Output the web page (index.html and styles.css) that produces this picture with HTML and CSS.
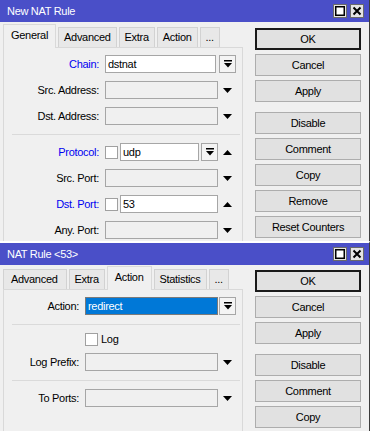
FILE: index.html
```html
<!DOCTYPE html>
<html lang="en">
<head>
    <meta charset="UTF-8">
    <meta name="viewport" content="width=device-width, initial-scale=1.0">
    <title>NAT Rule</title>
    <link rel="stylesheet" href="styles.css">
</head>
<body>
    <!-- first window: new rule, General tab -->
    <div class="window win-new">
        <div class="titlebar">
            <span class="title">New NAT Rule</span>
            <div class="tb-buttons">
                <svg width="14" height="14"><rect x="0.5" y="0.5" width="13" height="13" fill="#e4e4e4" stroke="#6a6a6a"/><rect x="2.75" y="2.75" width="8.5" height="8.5" fill="#fff" stroke="#000" stroke-width="1.5"/></svg>
                <svg width="14" height="14"><rect x="0.5" y="0.5" width="13" height="13" fill="#e4e4e4" stroke="#6a6a6a"/><path d="M3.5 3.5L10.5 10.5M10.5 3.5L3.5 10.5" stroke="#000" stroke-width="2"/></svg>
            </div>
        </div>
        <div class="win-body">
            <div class="left">
                <div class="tabs">
                    <div class="tab active">General</div>
                    <div class="tab">Advanced</div>
                    <div class="tab">Extra</div>
                    <div class="tab">Action</div>
                    <div class="tab">...</div>
                </div>
                <div class="panel">
                    <div class="row">
                        <span class="lbl blue">Chain:</span>
                        <div class="main"><div class="input filled short">dstnat</div></div>
                        <div class="side"><div class="dd"><svg width="8" height="8"><rect width="8" height="1.5"/><path d="M0 3h8L4 7.5z"/></svg></div></div>
                    </div>
                    <div class="row">
                        <span class="lbl">Src. Address:</span>
                        <div class="main"><div class="input"></div></div>
                        <div class="side"><svg width="9" height="5"><path d="M0 0h9L4.5 5z"/></svg></div>
                    </div>
                    <div class="row">
                        <span class="lbl">Dst. Address:</span>
                        <div class="main"><div class="input"></div></div>
                        <div class="side"><svg width="9" height="5"><path d="M0 0h9L4.5 5z"/></svg></div>
                    </div>
                    <div class="sep"></div>
                    <div class="row">
                        <span class="lbl blue">Protocol:</span>
                        <div class="main">
                            <span class="check"></span>
                            <div class="input filled">udp</div>
                            <div class="dd"><svg width="8" height="8"><rect width="8" height="1.5"/><path d="M0 3h8L4 7.5z"/></svg></div>
                        </div>
                        <div class="side"><svg width="9" height="5"><path d="M0 5h9L4.5 0z"/></svg></div>
                    </div>
                    <div class="row">
                        <span class="lbl">Src. Port:</span>
                        <div class="main"><div class="input"></div></div>
                        <div class="side"><svg width="9" height="5"><path d="M0 0h9L4.5 5z"/></svg></div>
                    </div>
                    <div class="row">
                        <span class="lbl blue">Dst. Port:</span>
                        <div class="main">
                            <span class="check"></span>
                            <div class="input filled">53</div>
                        </div>
                        <div class="side"><svg width="9" height="5"><path d="M0 5h9L4.5 0z"/></svg></div>
                    </div>
                    <div class="row">
                        <span class="lbl">Any. Port:</span>
                        <div class="main"><div class="input"></div></div>
                        <div class="side"><svg width="9" height="5"><path d="M0 0h9L4.5 5z"/></svg></div>
                    </div>
                </div>
            </div>
            <div class="buttons">
                <div class="btn default">OK</div>
                <div class="btn">Cancel</div>
                <div class="btn sp">Apply</div>
                <div class="btn">Disable</div>
                <div class="btn">Comment</div>
                <div class="btn">Copy</div>
                <div class="btn">Remove</div>
                <div class="btn">Reset Counters</div>
            </div>
        </div>
    </div>

    <!-- second window: existing rule, Action tab -->
    <div class="window win-rule">
        <div class="titlebar">
            <span class="title">NAT Rule &lt;53&gt;</span>
            <div class="tb-buttons">
                <svg width="14" height="14"><rect x="0.5" y="0.5" width="13" height="13" fill="#e4e4e4" stroke="#6a6a6a"/><rect x="2.75" y="2.75" width="8.5" height="8.5" fill="#fff" stroke="#000" stroke-width="1.5"/></svg>
                <svg width="14" height="14"><rect x="0.5" y="0.5" width="13" height="13" fill="#e4e4e4" stroke="#6a6a6a"/><path d="M3.5 3.5L10.5 10.5M10.5 3.5L3.5 10.5" stroke="#000" stroke-width="2"/></svg>
            </div>
        </div>
        <div class="win-body">
            <div class="left">
                <div class="tabs">
                    <div class="tab first">Advanced</div>
                    <div class="tab">Extra</div>
                    <div class="tab active">Action</div>
                    <div class="tab">Statistics</div>
                    <div class="tab">...</div>
                </div>
                <div class="panel">
                    <div class="row">
                        <span class="lbl">Action:</span>
                        <div class="main"><div class="input sel">redirect</div></div>
                        <div class="side"><div class="dd"><svg width="8" height="8"><rect width="8" height="1.5"/><path d="M0 3h8L4 7.5z"/></svg></div></div>
                    </div>
                    <div class="sep"></div>
                    <div class="row check-row">
                        <span class="lbl"></span>
                        <span class="check"></span>
                        <span class="check-text">Log</span>
                    </div>
                    <div class="row">
                        <span class="lbl">Log Prefix:</span>
                        <div class="main"><div class="input"></div></div>
                        <div class="side"><svg width="9" height="5"><path d="M0 0h9L4.5 5z"/></svg></div>
                    </div>
                    <div class="sep"></div>
                    <div class="row">
                        <span class="lbl">To Ports:</span>
                        <div class="main"><div class="input"></div></div>
                        <div class="side"><svg width="9" height="5"><path d="M0 0h9L4.5 5z"/></svg></div>
                    </div>
                </div>
            </div>
            <div class="buttons">
                <div class="btn default">OK</div>
                <div class="btn">Cancel</div>
                <div class="btn sp">Apply</div>
                <div class="btn">Disable</div>
                <div class="btn">Comment</div>
                <div class="btn">Copy</div>
            </div>
        </div>
    </div>
</body>
</html>
```

FILE: styles.css
```css
* {
    box-sizing: border-box;
}

body {
    margin: 0;
    width: 370px;
    height: 431px;
    overflow: hidden;
    background-color: #f0f0f0;
    font-family: "Liberation Sans", Arial, sans-serif;
    font-size: 11px;
    letter-spacing: -0.3px;
    color: #000;
}

.window {
    background-color: #f0f0f0;
    border-right: 1px solid #3c3c3c;
    overflow: hidden;
}

.win-new {
    height: 241px;
}

.win-rule {
    height: 190px;
    border-top: 2px solid #fff;
}

.titlebar {
    height: 22px;
    background-color: #4a4fc8;
    color: #fff;
    display: flex;
    align-items: center;
    justify-content: space-between;
    padding: 0 5px 0 7px;
}

.tb-buttons {
    display: flex;
    gap: 3px;
}

.tb-buttons svg {
    display: block;
}

.win-body {
    display: flex;
}

.left {
    width: 240px;
    margin-left: 3px;
    flex: none;
}

.tabs {
    display: flex;
    align-items: flex-end;
    height: 25px;
}

.win-rule .tabs {
    height: 24px;
}

.tab {
    height: 20px;
    line-height: 19px;
    padding: 0 5px;
    margin-right: 2px;
    border: 1px solid #d2d2d2;
    border-bottom: none;
    background-color: #e8e8e8;
    white-space: nowrap;
}

.tab.first {
    padding: 0 8px 0 7px;
}

.tab.active {
    position: relative;
    top: 1px;
    height: 24px;
    line-height: 21px;
    padding: 0 7px;
    background-color: #f0f0f0;
    border-color: #d9d9d9;
}

.panel {
    height: 200px;
    border: 1px solid #d9d9d9;
    background-color: #f0f0f0;
    padding-top: 3px;
}

.row {
    display: flex;
    align-items: center;
    height: 26px;
}

.lbl {
    flex: none;
    width: 95px;
    margin-right: 6px;
    text-align: right;
    white-space: nowrap;
}

.win-rule .lbl {
    width: 75px;
}

.lbl.blue {
    color: #0000f0;
}

.main {
    flex: none;
    width: 113px;
    display: flex;
    align-items: center;
    gap: 2px;
}

.win-rule .main {
    width: 133px;
}

.side {
    flex: none;
    width: 18px;
    display: flex;
    align-items: center;
    justify-content: center;
}

.side svg {
    display: block;
}

.input {
    flex: 1;
    height: 18px;
    line-height: 16px;
    padding: 0 2px;
    border: 1px solid #a6a6a6;
    background-color: #f0f0f0;
    white-space: nowrap;
    overflow: hidden;
}

.input.filled {
    background-color: #fff;
}

.input.short {
    margin-right: 2px;
}

.input.sel {
    background-color: #0078d7;
    color: #fff;
    border-color: #7a7a7a;
}

.dd {
    flex: none;
    width: 17px;
    height: 18px;
    border: 1px solid #a6a6a6;
    background-color: #f4f4f4;
    display: flex;
    align-items: center;
    justify-content: center;
}

.side .dd {
    margin-left: 1px;
}

.dd svg {
    display: block;
}

.check {
    flex: none;
    width: 13px;
    height: 13px;
    border: 1px solid #a0a0a0;
    background-color: #fff;
}

.check-row {
    height: 20px;
}

.check-text {
    margin-left: 3px;
}

.sep {
    height: 10px;
    display: flex;
    align-items: center;
    padding: 0 2px 0 8px;
}

.sep::before {
    content: "";
    flex: 1;
    height: 1px;
    background-color: #dadada;
}

.buttons {
    width: 106px;
    margin-left: 12px;
    padding-top: 6px;
    flex: none;
}

.win-rule .buttons {
    padding-top: 5px;
}

.btn {
    height: 22px;
    margin-bottom: 4px;
    border: 1px solid #adadad;
    background-color: #e1e1e1;
    display: flex;
    align-items: center;
    justify-content: center;
    white-space: nowrap;
}

.btn.default {
    border: 2px solid #1a1a1a;
}

.btn.sp {
    margin-bottom: 10px;
}
```
